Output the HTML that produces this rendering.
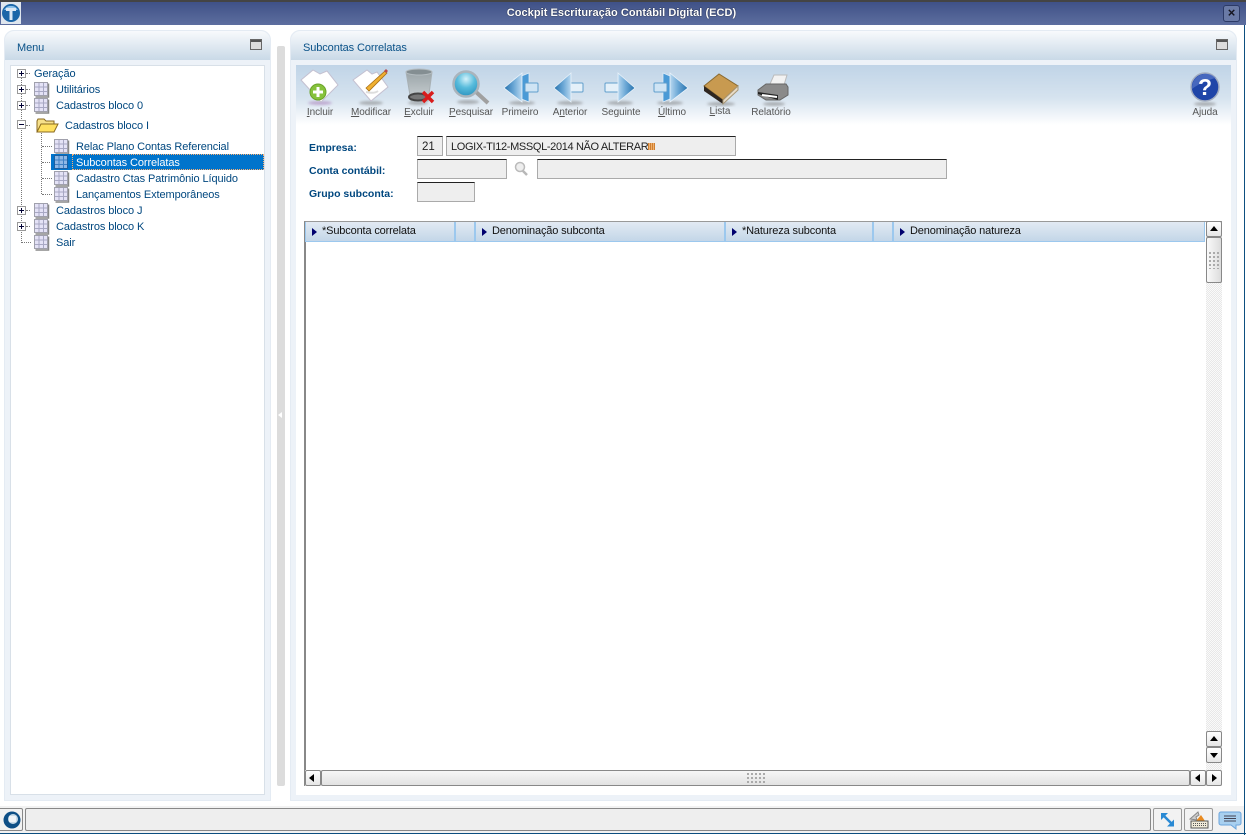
<!DOCTYPE html>
<html lang="pt"><head><meta charset="utf-8"><title>Cockpit Escrituração Contábil Digital (ECD)</title>
<style>
*{box-sizing:border-box}
html,body{margin:0;padding:0;width:1246px;height:835px;overflow:hidden;background:#fff;font-family:"Liberation Sans",sans-serif;font-size:11px;color:#000}
.a{position:absolute}
.t{position:absolute;white-space:nowrap;line-height:14px;color:#00477f;font-size:11px;letter-spacing:-.1px;margin-top:1px}
.lbl{position:absolute;white-space:nowrap;font-weight:bold;color:#00477f;font-size:10.5px;line-height:14px}
.tb{position:absolute;top:106px;width:70px;text-align:center;color:#555;font-size:10px;line-height:13px;letter-spacing:-.05px;white-space:nowrap}
.inp{position:absolute;background:#eee;border:1px solid #aaa;border-top:1px solid #222;border-right-width:1px;height:20px}
.hc{position:absolute;top:222px;height:20px;border-right:2px solid #9cc8ee;font-size:11px;line-height:19px;letter-spacing:-.15px;color:#111;padding-left:17px;white-space:nowrap}
.hc:before{content:"";position:absolute;left:7px;top:6px;border-left:5px solid #00006e;border-top:4px solid transparent;border-bottom:4px solid transparent}
.pm{position:absolute;left:17px;width:9px;height:9px;border:1px solid #999;background:#fff}
.pm:before{content:"";position:absolute;left:1px;top:3px;width:5px;height:1px;background:#003}
.pm.p:after{content:"";position:absolute;left:3px;top:1px;width:1px;height:5px;background:#003}
.dh{position:absolute;height:0;border-top:1px dotted #777}
.dv{position:absolute;width:0;border-left:1px dotted #777}
.sb{position:absolute;background:linear-gradient(#fff,#e6e6e6);border:1px solid #888;border-radius:2px}
.mn{position:absolute;top:39px;width:12px;height:11px;background:#dcdcdc;border:1px solid #666;box-shadow:inset 0 2px 0 #555}
</style></head><body>
<svg width="0" height="0" style="position:absolute"><defs>
<g id="grid"><path d="M15.500 2.500v13.500H2.500" stroke="#888" stroke-width="1.500" fill="none"/><rect x="1.500" y="1.500" width="13" height="13" fill="#e4e2f6" stroke="#a0a0ac"/><path d="M6 2v12M10.500 2v12M2 6h12M2 10.500h12" stroke="#a8a8c4" fill="none"/></g>
<linearGradient id="ar" x1="0" x2="1" y1="0" y2="0"><stop offset="0" stop-color="#b8d8f0"/><stop offset=".45" stop-color="#6ca8d6"/><stop offset="1" stop-color="#2470ac"/></linearGradient>
<linearGradient id="al" x1="1" x2="0" y1="0" y2="0"><stop offset="0" stop-color="#b8d8f0"/><stop offset=".45" stop-color="#6ca8d6"/><stop offset="1" stop-color="#2470ac"/></linearGradient>
<radialGradient id="lens" cx=".5" cy=".3" r=".7"><stop offset="0" stop-color="#d4f2fa"/><stop offset=".5" stop-color="#58bcdc"/><stop offset="1" stop-color="#2e94c0"/></radialGradient>
<linearGradient id="bin" x1="0" x2="0" y1="0" y2="1"><stop offset="0" stop-color="#9aa4a8"/><stop offset="1" stop-color="#ccd2d4"/></linearGradient>
</defs></svg>

<!-- Title bar -->
<div class="a" style="left:0;top:0;width:1246px;height:25px;background:linear-gradient(#3f5187,#5d6e9f);border-top:2px solid #444"></div>
<svg class="a" style="left:1px;top:2px" width="20" height="22"><rect width="20" height="22" fill="#dfe6ee"/><circle cx="10" cy="11" r="9" fill="#1b66a8"/><path d="M3 8a8 8 0 0 1 14 0z" fill="#8cc2ea"/><path d="M5 6h10v3h-3.500v9h-3V9H5z" fill="#dce8f4"/></svg>
<div class="a" style="left:0;top:6px;width:1243px;text-align:center;color:#fff;font-weight:bold;font-size:11px;line-height:15px;letter-spacing:.05px;text-shadow:0 0 1px #000">Cockpit Escrituração Contábil Digital (ECD)</div>
<div class="a" style="left:1223px;top:5px;width:17px;height:17px;border:1px solid #2c3a66;border-radius:3px;background:#6a7aa6;color:#14141f;font-weight:bold;font-size:13px;line-height:14px;text-align:center">×</div>
<div class="a" style="left:1244px;top:25px;width:1px;height:810px;background:#0d4f80"></div>

<!-- Menu panel -->
<div class="a" style="left:4px;top:30px;width:267px;height:771px;background:#edf2f8;border:1px solid #e4ebf3;border-radius:10px 10px 0 0"></div>
<div class="a" style="left:5px;top:31px;width:265px;height:29px;background:linear-gradient(#f8fafc,#c9d9e7);border-radius:10px 10px 0 0"></div>
<div class="t" style="left:17px;top:40px;color:#0a5288">Menu</div>
<div class="mn" style="left:250px"></div>
<div class="a" style="left:10px;top:65px;width:255px;height:730px;background:#fff;border:1px solid #d8e0e8"></div>

<!-- Tree lines -->
<div class="dv" style="left:21px;top:78px;height:165px"></div>
<div class="dv" style="left:41px;top:130px;height:64px"></div>
<div class="dh" style="left:26px;top:73px;width:4px"></div>
<div class="dh" style="left:26px;top:89px;width:4px"></div>
<div class="dh" style="left:26px;top:105px;width:4px"></div>
<div class="dh" style="left:26px;top:125px;width:4px"></div>
<div class="dh" style="left:42px;top:146px;width:10px"></div>
<div class="dh" style="left:42px;top:162px;width:10px"></div>
<div class="dh" style="left:42px;top:178px;width:10px"></div>
<div class="dh" style="left:42px;top:194px;width:10px"></div>
<div class="dh" style="left:26px;top:210px;width:4px"></div>
<div class="dh" style="left:26px;top:226px;width:4px"></div>
<div class="dh" style="left:22px;top:242px;width:9px"></div>

<div class="pm p" style="top:69px"></div>
<div class="pm p" style="top:85px"></div>
<div class="pm p" style="top:101px"></div>
<div class="pm" style="top:120px"></div>
<div class="pm p" style="top:206px"></div>
<div class="pm p" style="top:222px"></div>

<svg class="a" style="left:33px;top:81px" width="17" height="17"><use href="#grid"/></svg>
<svg class="a" style="left:33px;top:97px" width="17" height="17"><use href="#grid"/></svg>
<svg class="a" style="left:33px;top:202px" width="17" height="17"><use href="#grid"/></svg>
<svg class="a" style="left:33px;top:218px" width="17" height="17"><use href="#grid"/></svg>
<svg class="a" style="left:33px;top:234px" width="17" height="17"><use href="#grid"/></svg>
<svg class="a" style="left:53px;top:138px" width="17" height="17"><use href="#grid"/></svg>
<svg class="a" style="left:53px;top:170px" width="17" height="17"><use href="#grid"/></svg>
<svg class="a" style="left:53px;top:186px" width="17" height="17"><use href="#grid"/></svg>

<div class="a" style="left:51px;top:154px;width:213px;height:16px;background:#0074cc"></div>
<div class="a" style="left:72px;top:154px;width:192px;height:16px;border:1px dotted #ffb070"></div>
<svg class="a" style="left:53px;top:154px" width="17" height="17"><rect x="1.500" y="1.500" width="13" height="13" fill="#8fb8e6" stroke="#1c5fa0"/><path d="M6 2v12M10.500 2v12M2 6h12M2 10.500h12" stroke="#3e80c4" fill="none"/></svg>

<svg class="a" style="left:35px;top:117px" width="24" height="17"><path d="M2 15V4l1-2h6l2 2h8v3" fill="#f7e08a" stroke="#8a6a20"/><path d="M2 15l4-8h17l-4 8z" fill="#ffe060" stroke="#8a6a20"/></svg>

<div class="t" style="left:34px;top:66px">Geração</div>
<div class="t" style="left:56px;top:82px">Utilitários</div>
<div class="t" style="left:56px;top:98px">Cadastros bloco 0</div>
<div class="t" style="left:65px;top:118px">Cadastros bloco I</div>
<div class="t" style="left:76px;top:139px">Relac Plano Contas Referencial</div>
<div class="t" style="left:76px;top:155px;color:#fff">Subcontas Correlatas</div>
<div class="t" style="left:76px;top:171px">Cadastro Ctas Patrimônio Líquido</div>
<div class="t" style="left:76px;top:187px">Lançamentos Extemporâneos</div>
<div class="t" style="left:56px;top:203px">Cadastros bloco J</div>
<div class="t" style="left:56px;top:219px">Cadastros bloco K</div>
<div class="t" style="left:56px;top:235px">Sair</div>

<!-- Splitter -->
<div class="a" style="left:277px;top:46px;width:8px;height:740px;background:#dcdcdc;border-radius:2px"></div>
<div class="a" style="left:278px;top:412px;border-right:4px solid #fff;border-top:3px solid transparent;border-bottom:3px solid transparent"></div>

<!-- Main panel -->
<div class="a" style="left:290px;top:30px;width:947px;height:771px;background:#edf2f8;border:1px solid #e4ebf3;border-radius:10px 10px 0 0"></div>
<div class="a" style="left:291px;top:31px;width:945px;height:29px;background:linear-gradient(#f8fafc,#c9d9e7);border-radius:10px 10px 0 0"></div>
<div class="t" style="left:303px;top:40px;color:#0a5288">Subcontas Correlatas</div>
<div class="mn" style="left:1216px"></div>
<div class="a" style="left:296px;top:65px;width:935px;height:730px;background:#fff"></div>
<div class="a" style="left:296px;top:65px;width:935px;height:60px;background:linear-gradient(#c0d4e7,#d6e3ef 55%,#fff)"></div>

<!-- Toolbar icons -->
<svg class="a" style="left:296px;top:65px" width="935" height="60">
<defs><filter id="bl"><feGaussianBlur stdDeviation="1.200"/></filter></defs>
<g fill="#777" opacity=".5" filter="url(#bl)"><ellipse cx="24" cy="38" rx="12" ry="2" fill="#a070b0"/><ellipse cx="75" cy="38" rx="12" ry="2"/><ellipse cx="122" cy="38" rx="10" ry="2"/><ellipse cx="172" cy="37" rx="11" ry="2"/><ellipse cx="226" cy="38" rx="13" ry="2"/><ellipse cx="274" cy="38" rx="13" ry="2"/><ellipse cx="324" cy="38" rx="13" ry="2"/><ellipse cx="374" cy="38" rx="13" ry="2"/><ellipse cx="425" cy="39" rx="14" ry="2"/><ellipse cx="478" cy="39" rx="11" ry="2"/><ellipse cx="909" cy="39" rx="11" ry="2"/></g>
<!-- Incluir -->
<path d="M5 15L17 5l7 4 7-3 11 14-17 17z" fill="#fff" stroke="#c4c0d0"/>
<circle cx="22" cy="27" r="8" fill="#86c23c" stroke="#6aa428"/><path d="M22 22v10M17 27h10" stroke="#fff" stroke-width="3"/>
<!-- Modificar -->
<path d="M57 15L71 5l5 4 5-2 11 15-17 14z" fill="#fff" stroke="#c4c0d0"/>
<path d="M70 23L89 6l2 2-18 18z" fill="#f0b030" stroke="#a87018" stroke-width=".8"/><path d="M88 6l2-2 2 2-2 2z" fill="#b84848"/><path d="M70 27q8 2 12-1" stroke="#ddd" stroke-width="2" fill="none"/>
<!-- Excluir -->
<path d="M110 7h26l-4 29h-17z" fill="url(#bin)" stroke="#a8b0b4"/><ellipse cx="123" cy="7" rx="13" ry="3" fill="#848e92" stroke="#b4bcc0"/><ellipse cx="122" cy="32" rx="9" ry="3.500" fill="#777" stroke="#444" stroke-width="2"/>
<path d="M127 27l10 10M137 27l-10 10" stroke="#d81c1c" stroke-width="3.500"/>
<!-- Pesquisar -->
<path d="M180 27l12 11" stroke="#a0a0a0" stroke-width="4"/>
<circle cx="170" cy="19" r="12.500" fill="url(#lens)" stroke="#aab4bc" stroke-width="2.500"/>
<!-- Primeiro -->
<path d="M218 14L233 8v29l-15-6z" fill="#4a9ad6" stroke="#dcebf7" stroke-width=".8"/>
<rect x="229" y="18" width="13" height="9" rx="1" fill="#cfe4f4" stroke="#5f9ecc"/>
<path d="M208 23L226 8v29z" fill="url(#al)" stroke="#e8f2fa" stroke-width=".8"/>
<!-- Anterior -->
<rect x="273" y="18" width="14" height="9" rx="1" fill="#e4f0f9" stroke="#5f9ecc"/>
<path d="M258 23L275 8v29z" fill="url(#al)" stroke="#e8f2fa" stroke-width=".8"/>
<!-- Seguinte -->
<rect x="309" y="18" width="14" height="9" rx="1" fill="#e4f0f9" stroke="#5f9ecc"/>
<path d="M339 23L322 8v29z" fill="url(#ar)" stroke="#e8f2fa" stroke-width=".8"/>
<!-- Ultimo -->
<path d="M381 14L367 8v29l14-6z" fill="#4a9ad6" stroke="#dcebf7" stroke-width=".8"/>
<rect x="358" y="18" width="13" height="9" rx="1" fill="#cfe4f4" stroke="#5f9ecc"/>
<path d="M392 23L374 8v29z" fill="url(#ar)" stroke="#e8f2fa" stroke-width=".8"/>
<!-- Lista -->
<path d="M408 21L423 9l19 12-15 14z" fill="#c89a50" stroke="#8a6a30"/><path d="M408 21v5l19 13v-4z" fill="#2e2620"/><path d="M427 35v4l15-14v-4z" fill="#e8dcc8" stroke="#a89878"/>
<!-- Relatório -->
<path d="M474 19l4-9h13l-3 10z" fill="#f2f2f2" stroke="#bbb"/>
<path d="M462 25l8-6h20l2 3v8l-8 5H470l-8-5z" fill="#8a8a8a" stroke="#666"/><path d="M462 27l20 3v5l-20-6z" fill="#222"/><path d="M466 30l15 2" stroke="#fff" stroke-width="2"/>
<!-- Ajuda -->
<circle cx="909" cy="22" r="14" fill="#1f45a8" stroke="#a4aec0" stroke-width="1.500"/><path d="M896 24a14 14 0 0 1 24-11c-6 1-18 6-24 11z" fill="#5878c8" opacity=".7"/>
<text x="909" y="30" text-anchor="middle" font-family="Liberation Sans" font-weight="bold" font-size="23" fill="#fff">?</text>
</svg>

<div class="tb" style="left:285px"><u>I</u>ncluir</div>
<div class="tb" style="left:336px"><u>M</u>odificar</div>
<div class="tb" style="left:384px"><u>E</u>xcluir</div>
<div class="tb" style="left:436px"><u>P</u>esquisar</div>
<div class="tb" style="left:485px">Primeiro</div>
<div class="tb" style="left:535px">A<u>n</u>terior</div>
<div class="tb" style="left:586px">Se<u>g</u>uinte</div>
<div class="tb" style="left:637px"><u>Ú</u>ltimo</div>
<div class="tb" style="left:685px;top:105px"><u>L</u>ista</div>
<div class="tb" style="left:736px">Relatório</div>
<div class="tb" style="left:1170px">Ajuda</div>

<!-- Form -->
<div class="lbl" style="left:309px;top:141px">Empresa:</div>
<div class="lbl" style="left:309px;top:164px">Conta contábil:</div>
<div class="lbl" style="left:309px;top:187px">Grupo subconta:</div>
<div class="inp" style="left:417px;top:136px;width:26px;padding-left:4px;line-height:20px;font-size:11.500px;color:#222">21</div>
<div class="inp" style="left:446px;top:136px;width:290px;padding-left:4px;line-height:20px;font-size:11px;letter-spacing:-.35px;color:#222;white-space:nowrap">LOGIX-TI12-MSSQL-2014 NÃO ALTERAR<span style="display:inline-block;width:7px;height:7px;background:repeating-linear-gradient(90deg,#d08030 0 1px,#eeb070 1px 2px);vertical-align:0"></span></div>
<div class="inp" style="left:417px;top:159px;width:90px"></div>
<svg class="a" style="left:514px;top:160px" width="15" height="17"><path d="M8 10l5 5" stroke="#b8b8b8" stroke-width="2.500"/><circle cx="6" cy="7" r="4.500" fill="#eee" stroke="#bbb" stroke-width="1.500"/></svg>
<div class="inp" style="left:537px;top:159px;width:410px"></div>
<div class="inp" style="left:417px;top:182px;width:58px"></div>

<!-- Grid -->
<div class="a" style="left:304px;top:221px;width:918px;height:565px;border:1px solid #999;border-left:2px solid #888;background:#fff"></div>
<div class="a" style="left:305px;top:222px;width:900px;height:20px;background:linear-gradient(#e2eaf3,#c3d6e8);border:1px solid #9cc8ee;border-top:0"></div>
<div class="hc" style="left:305px;width:151px">*Subconta correlata</div>
<div class="a" style="left:456px;top:222px;width:20px;height:20px;border-right:2px solid #9cc8ee"></div>
<div class="hc" style="left:475px;width:251px">Denominação subconta</div>
<div class="hc" style="left:725px;width:149px">*Natureza subconta</div>
<div class="a" style="left:874px;top:222px;width:20px;height:20px;border-right:2px solid #9cc8ee"></div>
<div class="hc" style="left:893px;width:312px;border-right:0">Denominação natureza</div>

<!-- Vertical scrollbar -->
<div class="a" style="left:1206px;top:222px;width:16px;height:548px;background:repeating-conic-gradient(#e8e8e8 0 25%,#fafafa 0 50%) 0 0/2px 2px"></div>
<div class="sb" style="left:1206px;top:221px;width:16px;height:16px"></div>
<div class="a" style="left:1210px;top:226px;border-bottom:5px solid #000;border-left:4px solid transparent;border-right:4px solid transparent"></div>
<div class="sb" style="left:1206px;top:237px;width:16px;height:46px;background:linear-gradient(90deg,#fafafa,#dcdcdc)"></div>
<div class="a" style="left:1208px;top:251px;width:12px;height:18px;background:radial-gradient(#aaa 40%,transparent 45%) 0 0/4px 4px"></div>
<div class="sb" style="left:1206px;top:731px;width:16px;height:16px"></div>
<div class="a" style="left:1210px;top:736px;border-bottom:5px solid #000;border-left:4px solid transparent;border-right:4px solid transparent"></div>
<div class="sb" style="left:1206px;top:747px;width:16px;height:16px"></div>
<div class="a" style="left:1210px;top:753px;border-top:5px solid #000;border-left:4px solid transparent;border-right:4px solid transparent"></div>

<!-- Horizontal scrollbar -->
<div class="a" style="left:305px;top:770px;width:917px;height:16px;background:#eee"></div>
<div class="sb" style="left:305px;top:770px;width:16px;height:16px"></div>
<div class="a" style="left:309px;top:774px;border-right:5px solid #000;border-top:4px solid transparent;border-bottom:4px solid transparent"></div>
<div class="sb" style="left:321px;top:770px;width:869px;height:16px;background:linear-gradient(#f6f6f6,#e2e2e2)"></div>
<div class="a" style="left:746px;top:772px;width:20px;height:12px;background:radial-gradient(#aaa 40%,transparent 45%) 0 0/4px 4px"></div>
<div class="sb" style="left:1190px;top:770px;width:16px;height:16px"></div>
<div class="a" style="left:1195px;top:774px;border-right:5px solid #000;border-top:4px solid transparent;border-bottom:4px solid transparent"></div>
<div class="sb" style="left:1206px;top:770px;width:16px;height:16px"></div>
<div class="a" style="left:1212px;top:774px;border-left:5px solid #000;border-top:4px solid transparent;border-bottom:4px solid transparent"></div>

<!-- Status bar -->
<div class="a" style="left:0;top:806px;width:1244px;height:27px;background:#f2f2f2"></div>
<div class="a" style="left:0;top:833px;width:1246px;height:1px;background:#0d4f80"></div>
<div class="a" style="left:-2px;top:808px;width:25px;height:23px;border:1px solid #888;border-radius:2px"></div>
<svg class="a" style="left:2px;top:809px" width="20" height="21"><circle cx="10" cy="11" r="8.500" fill="#0e4f86"/><circle cx="11" cy="10" r="5" fill="#c8dbe8"/><rect x="7" y="7" width="7" height="6" fill="#f0f4f8" rx="1"/></svg>
<div class="a" style="left:25px;top:808px;width:1126px;height:23px;background:#eee;border:1px solid #888;border-radius:2px"></div>
<div class="a" style="left:1153px;top:808px;width:29px;height:23px;border:1px solid #999;border-radius:2px;background:#f2f2f2"></div>
<svg class="a" style="left:1158px;top:811px" width="19" height="18"><path d="M6 5l8 8" stroke="#2a8ad4" stroke-width="2.500"/><path d="M3 2h7l-7 7zM16 15.500H9l7-7z" fill="#2a8ad4"/></svg>
<div class="a" style="left:1184px;top:808px;width:29px;height:23px;border:1px solid #999;border-radius:2px;background:#f2f2f2"></div>
<svg class="a" style="left:1187px;top:809px" width="23" height="21"><path d="M3 10L11 3l1 3-3 2 1 3z" fill="#ccc" stroke="#888"/><path d="M9 12l5-6 4 6z" fill="#e88a20"/><rect x="4" y="12" width="17" height="7" fill="#f0ead8" stroke="#555"/><path d="M6 14.500h13M6 16.500h13" stroke="#555" stroke-dasharray="1 1"/></svg>
<svg class="a" style="left:1218px;top:811px" width="24" height="20"><path d="M3 1h18a2 2 0 0 1 2 2v9a2 2 0 0 1-2 2h-3v4l-5-4H3a2 2 0 0 1-2-2V3a2 2 0 0 1 2-2z" fill="#a8d0f0" stroke="#6aa4dc"/><path d="M6 5h12M6 7.500h12M6 10h12" stroke="#445" /></svg>
</body></html>
